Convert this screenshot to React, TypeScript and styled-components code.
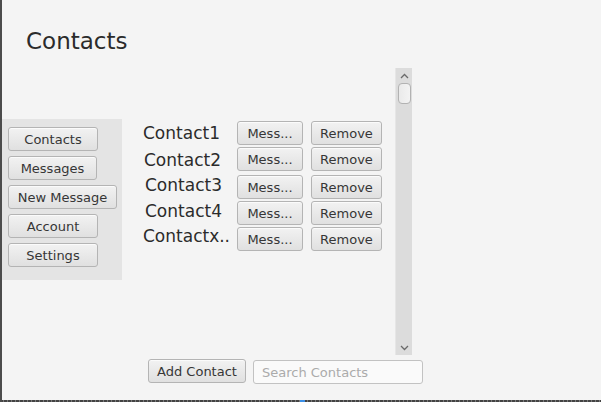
import React from "react";
import styled, { createGlobalStyle } from "styled-components";

const Global = createGlobalStyle`
  html, body { margin: 0; padding: 0; background: #f4f4f4; }
  body { font-family: "DejaVu Sans", "Liberation Sans", sans-serif; }
  * { box-sizing: border-box; }
`;

const Page = styled.div`
  position: relative;
  width: 601px;
  height: 402px;
  background: #f4f4f4;
  border-left: 2px solid #4c4c4c;
  display: flex;
  flex-direction: column;
  overflow: hidden;
`;

const EdgeMark = styled.div`
  position: absolute;
  left: -2px;
  top: 196px;
  width: 2px;
  height: 4px;
  background: #3b8fe6;
`;

const Title = styled.h1`
  margin: 28px 0 0 24px;
  font-size: 23px;
  font-weight: normal;
  line-height: 27px;
  color: #2b2b2b;
`;

const Main = styled.div`
  margin-top: 13px;
  height: 287px;
  display: flex;
`;

const Sidebar = styled.nav`
  margin-top: 51px;
  width: 120px;
  height: 161px;
  background: #e4e4e4;
  padding: 8px 6px;
  display: flex;
  flex-direction: column;
  align-items: flex-start;
  gap: 5px;
`;

const Button = styled.button<{ $w?: number }>`
  height: 24px;
  width: ${(p) => (p.$w ? `${p.$w}px` : "auto")};
  padding: 0 6px;
  border: 1px solid #b4b4b4;
  border-radius: 3px;
  background: linear-gradient(#f2f2f2, #e0e0e0);
  box-shadow: inset 0 1px 0 #fbfbfb;
  font-family: "DejaVu Sans", "Liberation Sans", sans-serif;
  font-size: 13px;
  color: #363636;
  white-space: nowrap;
  display: flex;
  align-items: center;
  justify-content: center;
  flex-shrink: 0;
`;

const ContactPane = styled.div`
  width: 273px;
  padding-top: 53px;
  display: flex;
  flex-direction: column;
`;

const Row = styled.div<{ $mt: number }>`
  margin-top: ${(p) => p.$mt}px;
  height: 24px;
  display: flex;
  align-items: center;
`;

const Name = styled.span<{ $dx: number; $dy: number }>`
  width: 115px;
  padding-left: ${(p) => 21 + p.$dx}px;
  font-size: 17px;
  color: #2b2b2b;
  position: relative;
  top: ${(p) => p.$dy}px;
  white-space: nowrap;
`;

const RowButtons = styled.div`
  display: flex;
  gap: 8px;
`;

const ScrollBar = styled.div`
  width: 17px;
  height: 287px;
  background: #dcdcdc;
  display: flex;
  flex-direction: column;
  align-items: center;
  border-left: 1px solid #e6e6e6;
`;

const Arrow = styled.div`
  height: 15px;
  width: 100%;
  display: flex;
  align-items: center;
  justify-content: center;
  flex-shrink: 0;
`;

const Thumb = styled.div`
  width: 13px;
  height: 21px;
  border: 1px solid #b2b2b2;
  border-radius: 4px;
  background: linear-gradient(90deg, #eaeaea, #f3f3f3);
`;

const Spacer = styled.div`
  flex: 1;
`;

const BottomBar = styled.div`
  margin-top: 4px;
  padding-left: 146px;
  display: flex;
  gap: 7px;
  align-items: flex-start;
`;

const Search = styled.input`
  margin-top: 1px;
  width: 170px;
  height: 24px;
  border: 1px solid #c2c2c2;
  border-radius: 3px;
  background: #fafafa;
  padding: 0 8px;
  font-family: "DejaVu Sans", "Liberation Sans", sans-serif;
  font-size: 13px;
  color: #333;
  outline: none;
  &::placeholder { color: #ababab; }
`;

const WindowEdge = styled.div`
  margin-top: auto;
  margin-left: -2px;
  height: 2px;
  background: repeating-linear-gradient(90deg, #444 0 3px, #7a7a7a 3px 4px);
  position: relative;
`;

const EdgeBlue = styled.div`
  position: absolute;
  left: 300px;
  top: 0;
  width: 5px;
  height: 2px;
  background: #3b8fe6;
`;

const contacts = [
  { name: "Contact1", mt: 0, dx: 0, dy: 0 },
  { name: "Contact2", mt: 2, dx: 1, dy: 1 },
  { name: "Contact3", mt: 4, dx: 2, dy: -2 },
  { name: "Contact4", mt: 2, dx: 2, dy: -2 },
  { name: "Contactx..", mt: 2, dx: 0, dy: -3 },
];

const navItems = [
  { label: "Contacts", w: 90 },
  { label: "Messages", w: 89 },
  { label: "New Message", w: 109 },
  { label: "Account", w: 90 },
  { label: "Settings", w: 90 },
];

export default function App() {
  return (
    <Page>
      <Global />
      <EdgeMark />
      <Title>Contacts</Title>
      <Main>
        <Sidebar>
          {navItems.map((n) => (
            <Button key={n.label} $w={n.w}>
              {n.label}
            </Button>
          ))}
        </Sidebar>
        <ContactPane>
          {contacts.map((c) => (
            <Row key={c.name} $mt={c.mt}>
              <Name $dx={c.dx} $dy={c.dy}>
                {c.name}
              </Name>
              <RowButtons>
                <Button $w={66}>Mess...</Button>
                <Button $w={71}>Remove</Button>
              </RowButtons>
            </Row>
          ))}
        </ContactPane>
        <ScrollBar>
          <Arrow>
            <svg width="9" height="6" viewBox="0 0 9 6">
              <path d="M1 5 L4.5 1.5 L8 5" fill="none" stroke="#6a6a6a" strokeWidth="1.3" />
            </svg>
          </Arrow>
          <Thumb />
          <Spacer />
          <Arrow>
            <svg width="9" height="6" viewBox="0 0 9 6">
              <path d="M1 1 L4.5 4.5 L8 1" fill="none" stroke="#6a6a6a" strokeWidth="1.3" />
            </svg>
          </Arrow>
        </ScrollBar>
      </Main>
      <BottomBar>
        <Button $w={98}>Add Contact</Button>
        <Search placeholder="Search Contacts" />
      </BottomBar>
      <WindowEdge>
        <EdgeBlue />
      </WindowEdge>
    </Page>
  );
}
